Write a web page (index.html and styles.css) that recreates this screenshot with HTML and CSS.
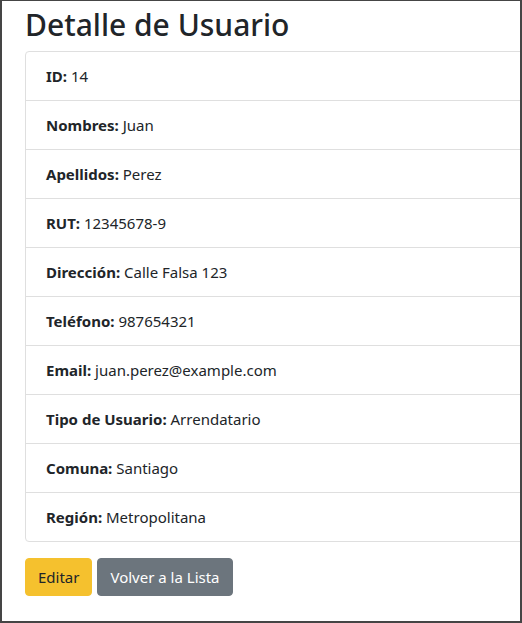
FILE: index.html
```html
<!DOCTYPE html>
<html lang="es">
<head>
<meta charset="utf-8">
<title>Detalle de Usuario</title>
<link rel="stylesheet" href="styles.css">
</head>
<body>
<div class="frame">
  <div class="container">
    <h1 class="title">Detalle de Usuario</h1>
    <ul class="list-group">
      <li class="list-group-item"><strong>ID:</strong> 14</li>
      <li class="list-group-item"><strong>Nombres:</strong> Juan</li>
      <li class="list-group-item"><strong>Apellidos:</strong> Perez</li>
      <li class="list-group-item"><strong>RUT:</strong> 12345678-9</li>
      <li class="list-group-item"><strong>Dirección:</strong> Calle Falsa 123</li>
      <li class="list-group-item"><strong>Teléfono:</strong> 987654321</li>
      <li class="list-group-item"><strong>Email:</strong> juan.perez@example.com</li>
      <li class="list-group-item"><strong>Tipo de Usuario:</strong> Arrendatario</li>
      <li class="list-group-item"><strong>Comuna:</strong> Santiago</li>
      <li class="list-group-item"><strong>Región:</strong> Metropolitana</li>
    </ul>
    <div class="actions">
      <a class="btn btn-warning" href="#">Editar</a>
      <a class="btn btn-secondary" href="#">Volver a la Lista</a>
    </div>
  </div>
</div>
</body>
</html>
```

FILE: styles.css
```css
* { box-sizing: border-box; }
html, body { margin: 0; padding: 0; background: #fff; }
body {
  font-family: "Segoe UI", "Noto Sans", "Open Sans", sans-serif;
  font-size: 15px;
  line-height: 24px;
  color: #212529;
}
.frame {
  height: 623px;
  width: 522px;
  border-style: solid;
  border-color: #454545;
  border-width: 1px 2px 2px 2px;
  overflow: hidden;
}
.container {
  padding: 6px 0 0 23px;
  width: 620px;
}
.title {
  margin: 0 0 8px 0;
  font-size: 30px;
  font-weight: 500;
  line-height: 36px;
}
.list-group {
  list-style: none;
  margin: 0;
  padding: 0;
  border: 1px solid #dfdfdf;
  border-radius: 4px;
}
.list-group-item {
  padding: 12px 20px;
  border-top: 1px solid #dfdfdf;
}
.list-group-item:first-child { border-top: 0; }
.list-group-item strong { font-weight: 700; }
.actions {
  margin-top: 16px;
  display: flex;
  gap: 5px;
}
.btn {
  display: inline-block;
  padding: 6px 12px;
  font-size: 15px;
  line-height: 24px;
  border-radius: 4px;
  text-decoration: none;
  border: 1px solid transparent;
}
.btn-warning { background: #f5c12e; color: #212529; border-color: #f5c12e; }
.btn-secondary { background: #6c757d; color: #fff; border-color: #6c757d; }
```
